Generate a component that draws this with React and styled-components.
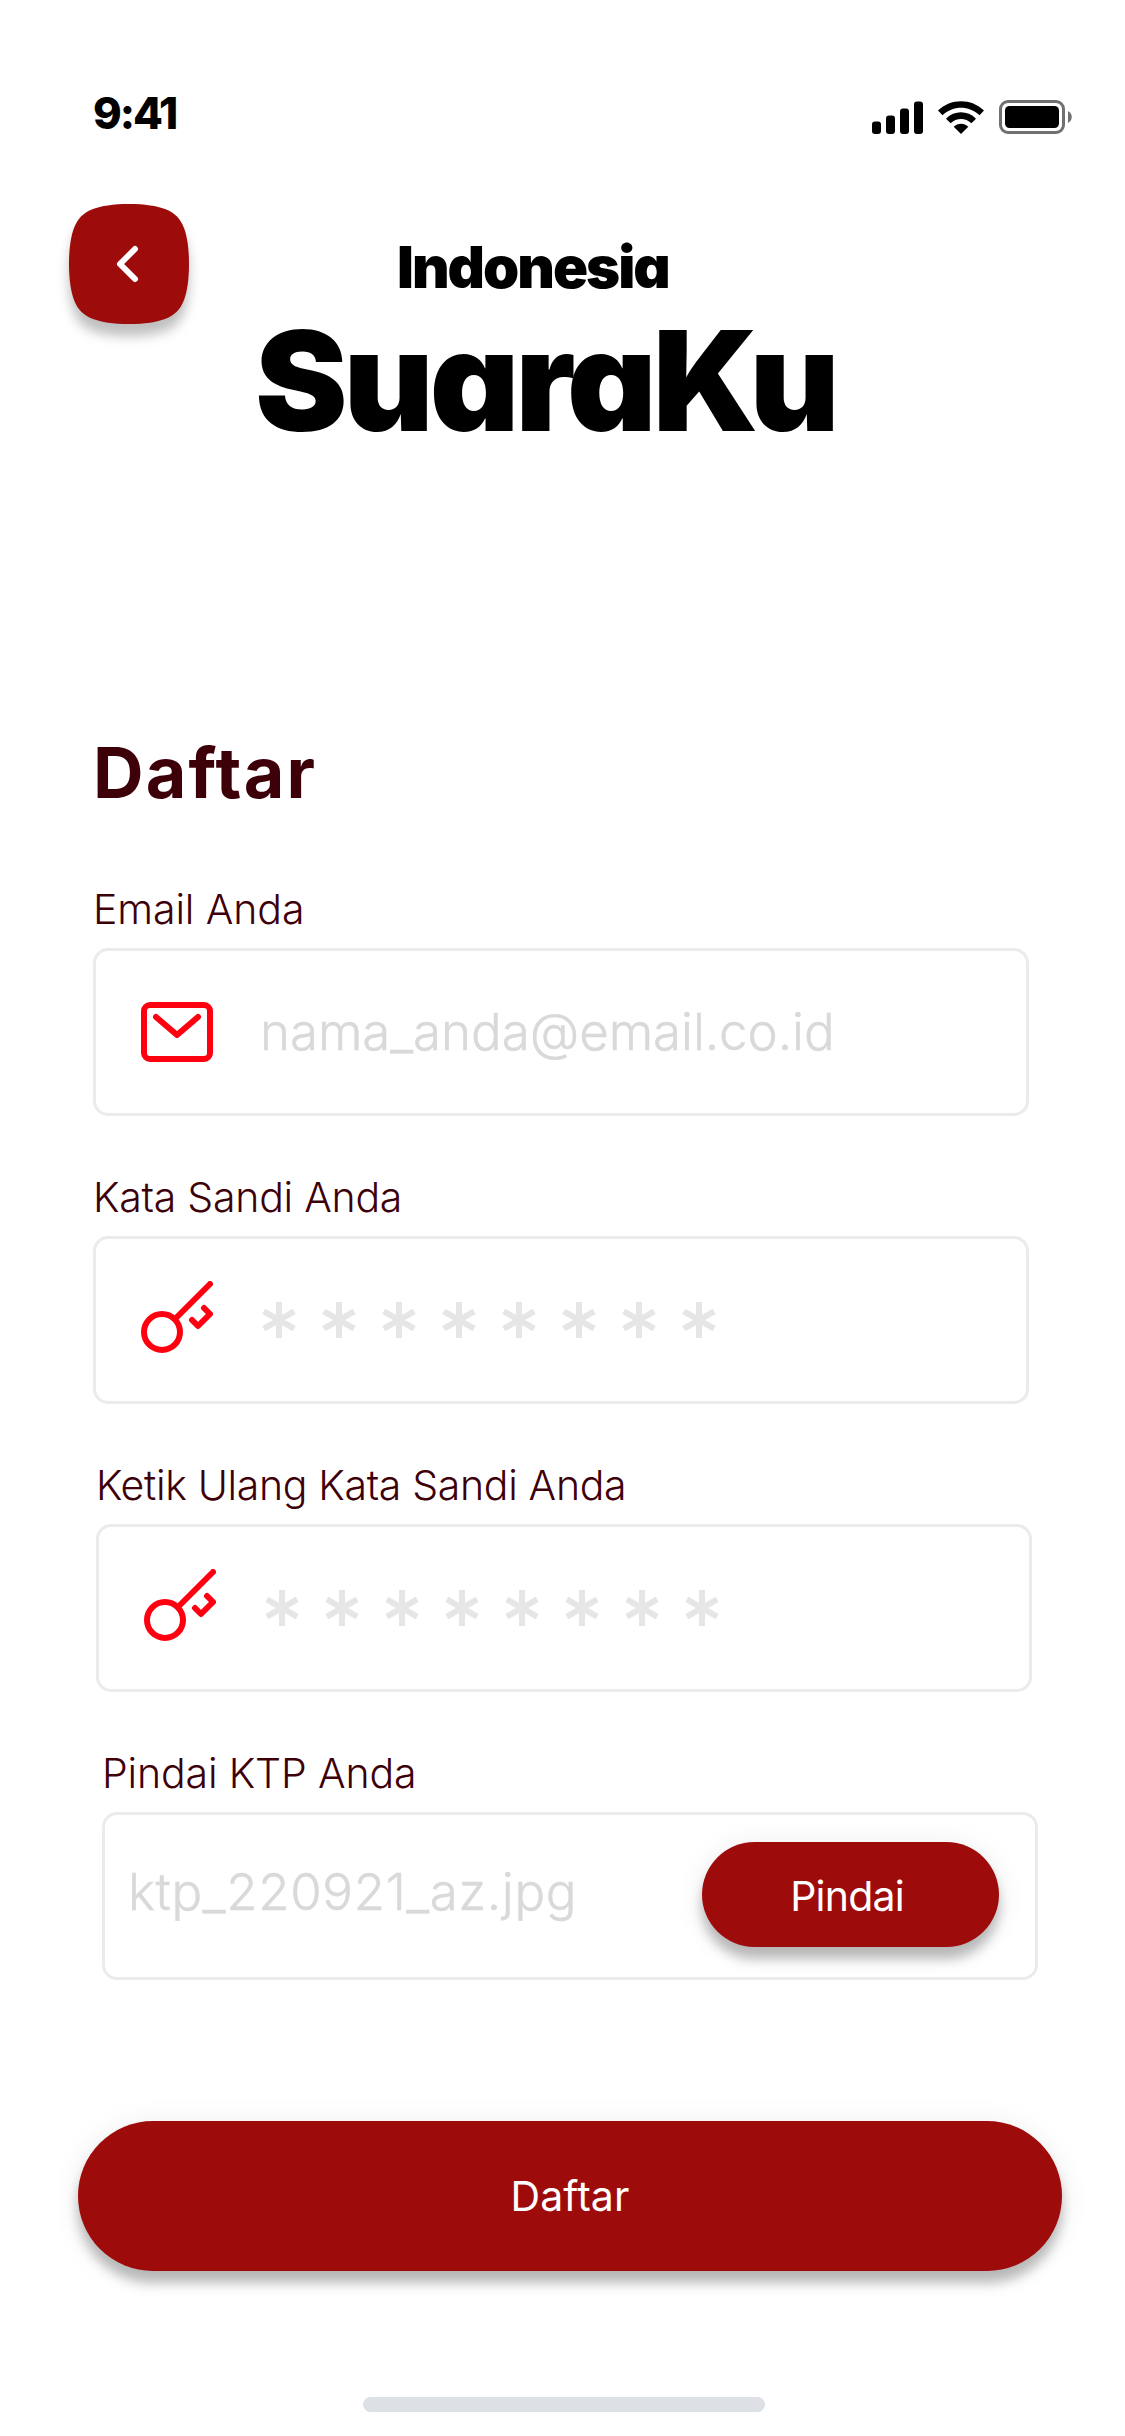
import React from "react";
import styled, { createGlobalStyle } from "styled-components";

const red = "#9e0b0b";
const maroon = "#3d0008";
const line = "#ebebeb";

const GlobalStyle = createGlobalStyle`
  * { box-sizing: border-box; }
  body { margin: 0; background: #fff; }
  button { border: 0; padding: 0; font: inherit; cursor: pointer; }
`;

const Screen = styled.div`
  display: flex;
  flex-direction: column;
  width: 1125px;
  height: 2436px;
  overflow: hidden;
  background: #fff;
  font-family: "Inter", "Liberation Sans", sans-serif;
`;

const StatusBar = styled.header`
  display: flex;
  justify-content: space-between;
  height: 204px;
  padding: 87px 53px 0 93px;
`;

const Time = styled.span`
  font-size: 43.5px;
  line-height: 52px;
  font-weight: 800;
  letter-spacing: -2px;
  color: #000;
`;

const StatusIcons = styled.div`
  display: flex;
  align-items: flex-end;
  gap: 15px;
  height: 47px;
`;

const Top = styled.div`
  display: flex;
  align-items: flex-start;
  height: 527px;
  padding-left: 69px;
`;

const BackButton = styled.button`
  width: 120px;
  height: 120px;
  background: none;

  svg {
    display: block;
    overflow: visible;
    filter: drop-shadow(0 12px 6px rgba(0, 0, 0, 0.25));
  }
`;

const Brand = styled.div`
  display: flex;
  flex-direction: column;
  gap: 14px;
  margin: 33px 0 0 66px;
  color: #000;
  font-weight: 900;
  font-feature-settings: "cv11";
  white-space: nowrap;
`;

const Country = styled.span`
  padding-left: 142px;
  font-size: 58px;
  line-height: 60px;
  letter-spacing: -2px;
`;

const AppName = styled.span`
  font-size: 139px;
  line-height: 140px;
  letter-spacing: -4.1px;
`;

const Title = styled.h1`
  margin: 0 0 69px 93px;
  font-size: 70px;
  line-height: 84px;
  font-weight: 700;
  letter-spacing: 2.1px;
  color: ${maroon};
`;

const Form = styled.form`
  display: flex;
  flex-direction: column;
  gap: 56px;
`;

const Field = styled.div`
  display: flex;
  flex-direction: column;
  gap: 14px;
  width: 936px;
  margin-left: ${(p) => p.$indent}px;
`;

const Label = styled.label`
  font-size: 41px;
  line-height: 50px;
  font-weight: 300;
  letter-spacing: ${(p) => p.$tracking}px;
  color: ${maroon};
`;

const Box = styled.div`
  display: flex;
  align-items: center;
  gap: 47px;
  height: 168px;
  padding-left: 45px;
  border: 3px solid ${line};
  border-radius: 15px;
`;

const FileBox = styled(Box)`
  justify-content: space-between;
  padding: 0 36px 0 23px;
`;

const Hint = styled.span`
  margin-bottom: ${(p) => p.$lift || 0}px;
  font-size: 51px;
  line-height: 62px;
  font-weight: 300;
  letter-spacing: ${(p) => p.$tracking}px;
  color: #d9d9d9;
  -webkit-text-stroke: 0.5px #d9d9d9;
`;

const Mask = styled.div`
  display: flex;
  gap: 26px;
  margin-left: 2px;
`;

const Pill = styled.button`
  display: flex;
  align-items: center;
  justify-content: center;
  border-radius: 75px;
  background: ${red};
  box-shadow: 0 12px 12px rgba(0, 0, 0, 0.25), 0 3px 30px rgba(0, 0, 0, 0.08);
  color: #fff;
  font-size: 41px;
  line-height: 50px;
  font-weight: 400;
`;

const ScanButton = styled(Pill)`
  width: 297px;
  height: 105px;
  margin-bottom: 3px;
  padding: 3px 7px 0 0;
  letter-spacing: -0.8px;
`;

const SubmitButton = styled(Pill)`
  width: 984px;
  height: 150px;
  margin: 141px 0 0 78px;
  letter-spacing: 0.1px;
`;

const HomeBar = styled.div`
  width: 402px;
  height: 15px;
  margin: 126px 0 0 363px;
  border-radius: 8px;
  background: #dde0e4;
`;

const Signal = () => (
  <svg width="51" height="33" viewBox="0 0 51 33">
    <rect x="0" y="20.5" width="9" height="12.5" rx="3" />
    <rect x="14" y="14.5" width="9" height="18.5" rx="3" />
    <rect x="28" y="7.5" width="9" height="25.5" rx="3" />
    <rect x="42" y="0.5" width="9" height="32.5" rx="3" />
  </svg>
);

const Wifi = () => (
  <svg width="46" height="33" viewBox="0 0 46 33">
    <path d="M0 9.5C12.5-3 33.5-3 46 9.5L41.5 14.3C31 4.2 15 4.2 4.5 14.3Z" />
    <path d="M8 17.7C16.5 9.2 29.5 9.2 38 17.7L33.4 22.3C27.6 16.6 18.4 16.6 12.6 22.3Z" />
    <path d="M15.7 25.7C19.8 21.8 26.2 21.8 30.3 25.7L23 33Z" />
  </svg>
);

const Battery = () => (
  <svg width="73" height="34" viewBox="0 0 73 34">
    <rect x="1.5" y="1.5" width="63" height="31" rx="7.5" fill="none" stroke="#707070" strokeWidth="3" />
    <rect x="6" y="6" width="54" height="22" rx="4.5" />
    <path d="M69 11C74 13.5 74 20.5 69 23Z" fill="#707070" />
  </svg>
);

const BackIcon = () => (
  <svg width="120" height="120" viewBox="0 0 120 120">
    <path
      fill={red}
      d="M60 0C76 0 88 2 96 5C106 9 111 14 115 24C118 32 120 44 120 60C120 76 118 88 115 96C111 106 106 111 96 115C88 118 76 120 60 120C44 120 32 118 24 115C14 111 9 106 5 96C2 88 0 76 0 60C0 44 2 32 5 24C9 14 14 9 24 5C32 2 44 0 60 0Z"
    />
    <path d="M66 45L51 60L66 75" fill="none" stroke="#fff" strokeWidth="6" strokeLinecap="round" strokeLinejoin="round" />
  </svg>
);

const iconStroke = {
  fill: "none",
  stroke: "#ff0010",
  strokeWidth: 6,
  strokeLinecap: "round",
  strokeLinejoin: "round",
};

const MailIcon = () => (
  <svg width="72" height="60" viewBox="0 0 72 60" {...iconStroke}>
    <rect x="3" y="3" width="66" height="54" rx="6" />
    <path d="M15 15L36 33L57 15" />
  </svg>
);

const KeyIcon = () => (
  <svg width="72" height="78" viewBox="0 0 72 78" {...iconStroke}>
    <circle cx="21" cy="51" r="18" />
    <path d="M34.5 37.5L69 3" />
    <path d="M63 27L69 33L57 45L51 39" />
  </svg>
);

const Star = () => (
  <svg width="34" height="36" viewBox="0 0 34 36" stroke="#e6e6e6" strokeWidth="6" fill="none">
    <path d="M17 0V36M1.8 9.4L32.2 26.6M32.2 9.4L1.8 26.6" />
  </svg>
);

const PasswordBox = () => (
  <Box>
    <KeyIcon />
    <Mask>
      {Array.from({ length: 8 }, (_, i) => (
        <Star key={i} />
      ))}
    </Mask>
  </Box>
);

export default function App() {
  return (
    <Screen>
      <GlobalStyle />
      <StatusBar>
        <Time>9:41</Time>
        <StatusIcons>
          <Signal />
          <Wifi />
          <Battery />
        </StatusIcons>
      </StatusBar>
      <Top>
        <BackButton type="button" aria-label="Kembali">
          <BackIcon />
        </BackButton>
        <Brand>
          <Country>Indonesia</Country>
          <AppName>SuaraKu</AppName>
        </Brand>
      </Top>
      <Title>Daftar</Title>
      <Form onSubmit={(e) => e.preventDefault()}>
        <Field $indent={93}>
          <Label $tracking={-0.1}>Email Anda</Label>
          <Box>
            <MailIcon />
            <Hint $tracking={-0.05}>nama_anda@email.co.id</Hint>
          </Box>
        </Field>
        <Field $indent={93}>
          <Label $tracking={-0.25}>Kata Sandi Anda</Label>
          <PasswordBox />
        </Field>
        <Field $indent={96}>
          <Label $tracking={-0.33}>Ketik Ulang Kata Sandi Anda</Label>
          <PasswordBox />
        </Field>
        <Field $indent={102}>
          <Label $tracking={-0.15}>Pindai KTP Anda</Label>
          <FileBox>
            <Hint $lift={8} $tracking={0.65}>ktp_220921_az.jpg</Hint>
            <ScanButton type="button">Pindai</ScanButton>
          </FileBox>
        </Field>
      </Form>
      <SubmitButton type="button">Daftar</SubmitButton>
      <HomeBar />
    </Screen>
  );
}
